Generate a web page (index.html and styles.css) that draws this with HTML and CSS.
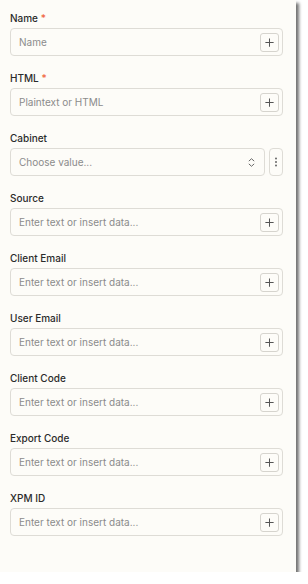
FILE: index.html
```html
<!DOCTYPE html>
<html>
<head>
<meta charset="utf-8">
<link rel="stylesheet" href="styles.css">
</head>
<body>
<div class="panel">
  <div class="field">
    <div class="label">Name <span class="req">*</span></div>
    <div class="row">
      <div class="input"><span class="ph">Name</span><span class="btn"><svg viewBox="0 0 12 12" width="11" height="11"><path d="M6 1.5v9M1.5 6h9" stroke="#555" stroke-width="1.1" fill="none"/></svg></span></div>
    </div>
  </div>
  <div class="field">
    <div class="label">HTML <span class="req">*</span></div>
    <div class="row">
      <div class="input"><span class="ph">Plaintext or HTML</span><span class="btn"><svg viewBox="0 0 12 12" width="11" height="11"><path d="M6 1.5v9M1.5 6h9" stroke="#555" stroke-width="1.1" fill="none"/></svg></span></div>
    </div>
  </div>
  <div class="field">
    <div class="label">Cabinet</div>
    <div class="row">
      <div class="input select"><span class="ph">Choose value...</span><svg class="chev" viewBox="0 0 10 12" width="9" height="11"><path d="M2 4.5L5 1.8 8 4.5M2 7.5L5 10.2 8 7.5" stroke="#666" stroke-width="1.1" fill="none"/></svg></div>
      <div class="kebab"><svg viewBox="0 0 4 12" width="4" height="12"><circle cx="2" cy="2.5" r="1" fill="#666"/><circle cx="2" cy="6" r="1" fill="#666"/><circle cx="2" cy="9.5" r="1" fill="#666"/></svg></div>
    </div>
  </div>
  <div class="field">
    <div class="label">Source</div>
    <div class="row"><div class="input"><span class="ph">Enter text or insert data...</span><span class="btn"><svg viewBox="0 0 12 12" width="11" height="11"><path d="M6 1.5v9M1.5 6h9" stroke="#555" stroke-width="1.1" fill="none"/></svg></span></div></div>
  </div>
  <div class="field">
    <div class="label">Client Email</div>
    <div class="row"><div class="input"><span class="ph">Enter text or insert data...</span><span class="btn"><svg viewBox="0 0 12 12" width="11" height="11"><path d="M6 1.5v9M1.5 6h9" stroke="#555" stroke-width="1.1" fill="none"/></svg></span></div></div>
  </div>
  <div class="field">
    <div class="label">User Email</div>
    <div class="row"><div class="input"><span class="ph">Enter text or insert data...</span><span class="btn"><svg viewBox="0 0 12 12" width="11" height="11"><path d="M6 1.5v9M1.5 6h9" stroke="#555" stroke-width="1.1" fill="none"/></svg></span></div></div>
  </div>
  <div class="field">
    <div class="label">Client Code</div>
    <div class="row"><div class="input"><span class="ph">Enter text or insert data...</span><span class="btn"><svg viewBox="0 0 12 12" width="11" height="11"><path d="M6 1.5v9M1.5 6h9" stroke="#555" stroke-width="1.1" fill="none"/></svg></span></div></div>
  </div>
  <div class="field">
    <div class="label">Export Code</div>
    <div class="row"><div class="input"><span class="ph">Enter text or insert data...</span><span class="btn"><svg viewBox="0 0 12 12" width="11" height="11"><path d="M6 1.5v9M1.5 6h9" stroke="#555" stroke-width="1.1" fill="none"/></svg></span></div></div>
  </div>
  <div class="field">
    <div class="label">XPM ID</div>
    <div class="row"><div class="input"><span class="ph">Enter text or insert data...</span><span class="btn"><svg viewBox="0 0 12 12" width="11" height="11"><path d="M6 1.5v9M1.5 6h9" stroke="#555" stroke-width="1.1" fill="none"/></svg></span></div></div>
  </div>
</div>
</body>
</html>
```

FILE: styles.css
```css
html, body {
  margin: 0;
  padding: 0;
  background: #ffffff;
}
body {
  font-family: Inter, "Noto Sans", sans-serif;
}
.panel {
  width: 296px;
  height: 572px;
  box-sizing: border-box;
  background: #fdfcf8;
  box-shadow: 3px 3px 3px rgba(0, 0, 0, 0.55);
  padding: 11px 13px 0 10px;
  display: flex;
  flex-direction: column;
  gap: 15px;
}
.field {
  display: flex;
  flex-direction: column;
  gap: 3px;
}
.label {
  font-size: 10px;
  line-height: 14px;
  font-weight: 500;
  color: #2b2b2b;
}
.req {
  color: #f0643c;
}
.row {
  display: flex;
  gap: 4px;
}
.input {
  flex: 1;
  height: 28px;
  box-sizing: border-box;
  border: 1px solid #dedcd6;
  border-radius: 4px;
  background: #fdfcf8;
  display: flex;
  align-items: center;
  justify-content: space-between;
  padding: 0 3px 0 8px;
  font-size: 10px;
}
.ph {
  color: #8b8b8b;
}
.btn {
  width: 19px;
  height: 19px;
  box-sizing: border-box;
  border: 1px solid #d6d4ce;
  border-radius: 3px;
  display: flex;
  align-items: center;
  justify-content: center;
}
.select {
  padding-right: 8px;
}
.chev {
  display: block;
}
.kebab {
  width: 14px;
  height: 28px;
  box-sizing: border-box;
  border: 1px solid #dedcd6;
  border-radius: 4px;
  display: flex;
  align-items: center;
  justify-content: center;
}
```
